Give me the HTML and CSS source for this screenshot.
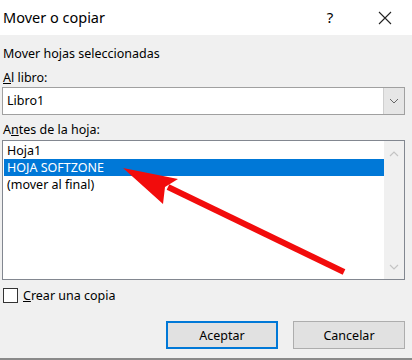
FILE: index.html
```html
<!DOCTYPE html>
<html lang="es">
<head>
  <meta charset="UTF-8" />
  <title>Mover o copiar</title>
  <link rel="stylesheet" href="styles.css">
</head>
<body>
  <div class="dialog">
    <div class="titlebar">
      <div class="title">Mover o copiar</div>
      <div class="help">?</div>
      <div class="close">
        <svg width="14" height="14" viewBox="0 0 14 14"><path d="M1 1L13 13M13 1L1 13" stroke="#222" stroke-width="1.1" fill="none"/></svg>
      </div>
    </div>

    <div class="content">
      <div class="label">Mover hojas seleccionadas</div>
      <div class="label gap"><u>A</u>l libro:</div>
      <div class="combo">
        <div class="combo-text">Libro1</div>
        <div class="combo-btn">
          <svg width="10" height="6" viewBox="0 0 10 6"><path d="M1 1L5 5L9 1" stroke="#666" stroke-width="1" fill="none"/></svg>
        </div>
      </div>

      <div class="label list-label">A<u>n</u>tes de la hoja:</div>
      <div class="listbox">
        <div class="items">
          <div class="item">Hoja1</div>
          <div class="item selected">HOJA SOFTZONE</div>
          <div class="item">(mover al final)</div>
        </div>
        <div class="scrollbar">
          <svg width="10" height="6" viewBox="0 0 10 6"><path d="M1 5L5 1L9 5" stroke="#c4c4c4" stroke-width="1.2" fill="none"/></svg>
          <svg width="10" height="6" viewBox="0 0 10 6"><path d="M1 1L5 5L9 1" stroke="#c4c4c4" stroke-width="1.2" fill="none"/></svg>
        </div>
      </div>

      <label class="check">
        <span class="box"></span>
        <span><u>C</u>rear una copia</span>
      </label>

      <div class="buttons">
        <button class="btn default">Aceptar</button>
        <button class="btn">Cancelar</button>
      </div>
    </div>

    <svg class="arrow" width="412" height="360" viewBox="0 0 412 360">
      <line x1="344" y1="272" x2="168" y2="187" stroke="#f20c0c" stroke-width="6"/>
      <polygon points="123,168 178,179 165,187 163,204" fill="#f20c0c"/>
    </svg>
  </div>
</body>
</html>
```

FILE: styles.css
```css
body {
  margin: 0;
  font-family: "Noto Sans", "Open Sans", sans-serif;
  font-size: 12.5px;
  color: #000;
}

.dialog {
  position: relative;
  width: 412px;
  height: 360px;
  background-color: #f0f0f0;
  border-bottom: 2px solid #8a8a8a;
  box-sizing: border-box;
  overflow: hidden;
}

.titlebar {
  height: 35px;
  background-color: #fff;
  display: flex;
  align-items: center;
}

.title {
  flex: 1;
  padding-left: 3px;
  font-size: 14.5px;
  padding-bottom: 2px;
}

.help {
  width: 20px;
  text-align: center;
  font-size: 15px;
  margin-right: 38px;
  padding-bottom: 2px;
}

.close {
  width: 14px;
  margin-right: 20px;
  display: flex;
}

.content {
  padding: 10px 7px 0 2px;
}

.label {
  line-height: 17px;
  padding-left: 1px;
}

.label.gap {
  margin-top: 7px;
}

.combo {
  margin-top: 1px;
  height: 28px;
  border: 1px solid #a0a0a0;
  background-color: #fff;
  display: flex;
  box-sizing: border-box;
}

.combo-text {
  flex: 1;
  padding-left: 4px;
  line-height: 26px;
}

.combo-btn {
  width: 20px;
  background-color: #e6e6e6;
  border-left: 1px solid #cfcfcf;
  display: flex;
  align-items: center;
  justify-content: center;
}

.list-label {
  margin-top: 6px;
}

.listbox {
  margin-top: 2px;
  height: 140px;
  border: 1px solid #828790;
  background-color: #fff;
  display: flex;
  box-sizing: border-box;
}

.items {
  flex: 1;
  padding: 1px 0 0 1px;
}

.item {
  line-height: 17px;
  height: 17px;
  padding-left: 3px;
}

.item.selected {
  background-color: #0078d7;
  color: #fff;
}

.scrollbar {
  width: 20px;
  background-color: #f0f0f0;
  display: flex;
  flex-direction: column;
  justify-content: space-between;
  align-items: center;
  padding: 10px 0 9px;
  box-sizing: border-box;
}

.check {
  display: flex;
  align-items: center;
  gap: 5px;
  margin-top: 7px;
  padding-left: 1px;
  line-height: 17px;
}

.box {
  width: 13px;
  height: 13px;
  border: 1px solid #333;
  background-color: #fff;
}

.buttons {
  display: flex;
  justify-content: flex-end;
  gap: 15px;
  margin-top: 17px;
}

.btn {
  width: 112px;
  height: 28px;
  font-family: inherit;
  font-size: 12.5px;
  background-color: #e1e1e1;
  border: 1px solid #adadad;
  color: #000;
  padding: 0;
}

.btn.default {
  border: 2px solid #0078d7;
}

.arrow {
  position: absolute;
  left: 0;
  top: 0;
}
```
